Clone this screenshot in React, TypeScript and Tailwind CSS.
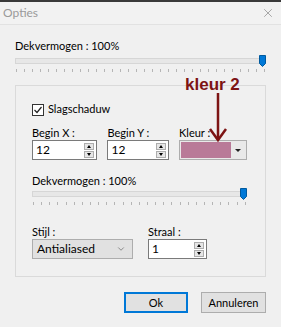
import { X, ChevronDown } from 'lucide-react';

const font = { fontFamily: 'Lato, "Noto Sans", sans-serif' };

const Thumb = () => (
    <svg width="7" height="12" viewBox="0 0 7 12" className="absolute top-0 right-0">
        <path d="M0.5 0.5 H6.5 V8.5 L3.5 11.5 L0.5 8.5 Z" fill="#0078d7" stroke="#005a9e" />
    </svg>
);

const Slider = ({ ticks }: { ticks: number }) => (
    <div>
        <div className="relative h-[12px]">
            <div className="absolute left-0 right-0 top-[3px] h-[6px] bg-[#e7e7e7] border border-[#d6d6d6]" />
            <Thumb />
        </div>
        <div className="mt-[2px] h-[3px] flex justify-between px-[1px]">
            {Array.from({ length: ticks }).map((_, i) => (
                <div key={i} className="w-px h-[3px] bg-[#b5b5b5]" />
            ))}
        </div>
    </div>
);

const SpinBox = ({ value, width }: { value: string; width: string }) => (
    <div className={`${width} h-[20px] bg-white border border-[#7a7a7a] flex items-center justify-between pl-[3px] pr-[2px]`}>
        <span className="text-[12px] leading-none">{value}</span>
        <div className="flex flex-col gap-px">
            <div className="w-[10px] h-[7px] bg-[#e6e6e6] border border-[#adadad] flex items-center justify-center">
                <div className="w-0 h-0 border-l-[2px] border-r-[2px] border-b-[3px] border-l-transparent border-r-transparent border-b-black" />
            </div>
            <div className="w-[10px] h-[7px] bg-[#e6e6e6] border border-[#adadad] flex items-center justify-center">
                <div className="w-0 h-0 border-l-[2px] border-r-[2px] border-t-[3px] border-l-transparent border-r-transparent border-t-black" />
            </div>
        </div>
    </div>
);

export default function App() {
    return (
        <div className="w-[281px] h-[327px] bg-[#f0f0f0] text-black text-[11px] overflow-hidden" style={font}>
            {/* window top edge */}
            <div className="h-[2px] bg-[#3a3a3a]" />

            {/* Title bar */}
            <div className="h-[23px] flex items-center justify-between pl-[3px] pr-[6px] bg-[#f2f2f2] border-b border-[#e2e2e2]">
                <span className="text-[12px] text-[#9a9a9a]">Opties</span>
                <X className="w-[14px] h-[14px] text-[#707070]" strokeWidth={1} />
            </div>

            <div className="px-[15px] pt-[13px]">
                <div className="leading-[16px]">Dekvermogen : 100%</div>
                <div className="mt-[1px]">
                    <Slider ticks={32} />
                </div>

                {/* Group box */}
                <div className="relative mt-[13px] h-[192px] border border-[#dadada] pl-[16px] pr-[18px] pt-[17px]">
                    {/* annotation */}
                    <div className="absolute left-[169px] top-[-10px] text-[17px] font-bold leading-none text-[#7d1414]" style={{ fontFamily: '"Liberation Sans", Arial, sans-serif' }}>
                        kleur 2
                    </div>
                    <svg className="absolute left-[192px] top-[7px]" width="20" height="50" viewBox="0 0 20 50">
                        <path d="M10 0 V47" stroke="#7d1414" strokeWidth="2.5" />
                        <path d="M2 36 L10 47 L18 36" stroke="#7d1414" strokeWidth="2.5" fill="none" />
                    </svg>

                    <div className="flex items-center gap-[4px] h-[13px]">
                        <div className="w-[12px] h-[12px] border border-[#333] bg-white flex items-center justify-center">
                            <svg width="10" height="10" viewBox="0 0 10 10">
                                <path d="M1.5 5 L4 7.5 L8.5 2" stroke="#222" strokeWidth="1.2" fill="none" />
                            </svg>
                        </div>
                        <span>Slagschaduw</span>
                    </div>

                    <div className="mt-[10px] flex">
                        <div className="w-[76px]">
                            <div className="leading-[14px]">Begin X :</div>
                            <SpinBox value="12" width="w-[65px]" />
                        </div>
                        <div className="w-[72px]">
                            <div className="leading-[14px]">Begin Y :</div>
                            <SpinBox value="12" width="w-[62px]" />
                        </div>
                        <div>
                            <div className="leading-[14px]">Kleur :</div>
                            <div className="w-[68px] h-[20px] border border-[#adadad] bg-[#e9e9e9] flex p-px">
                                <div className="w-[50px] bg-[#b97a98]" />
                                <div className="flex-1 flex items-center justify-center">
                                    <div className="w-0 h-0 border-l-[3px] border-r-[3px] border-t-[3px] border-l-transparent border-r-transparent border-t-[#222]" />
                                </div>
                            </div>
                        </div>
                    </div>

                    <div className="mt-[14px] leading-[14px]">Dekvermogen : 100%</div>
                    <Slider ticks={27} />

                    <div className="mt-[20px] flex">
                        <div className="w-[116px]">
                            <div className="leading-[14px]">Stijl :</div>
                            <div className="w-[101px] h-[20px] bg-[#e1e1e1] border border-[#adadad] flex items-center justify-between pl-[4px] pr-[6px]">
                                <span className="text-[12px]">Antialiased</span>
                                <ChevronDown className="w-[10px] h-[10px] text-[#555]" strokeWidth={1.5} />
                            </div>
                        </div>
                        <div>
                            <div className="leading-[14px]">Straal :</div>
                            <SpinBox value="1" width="w-[59px]" />
                        </div>
                    </div>
                </div>

                {/* Buttons */}
                <div className="mt-[15px] flex justify-end gap-[13px]">
                    <button className="w-[64px] h-[21px] bg-[#e1e1e1] border-2 border-[#0078d7] leading-none">Ok</button>
                    <button className="w-[65px] h-[21px] bg-[#e1e1e1] border border-[#adadad] leading-none">Annuleren</button>
                </div>
            </div>
        </div>
    );
}
